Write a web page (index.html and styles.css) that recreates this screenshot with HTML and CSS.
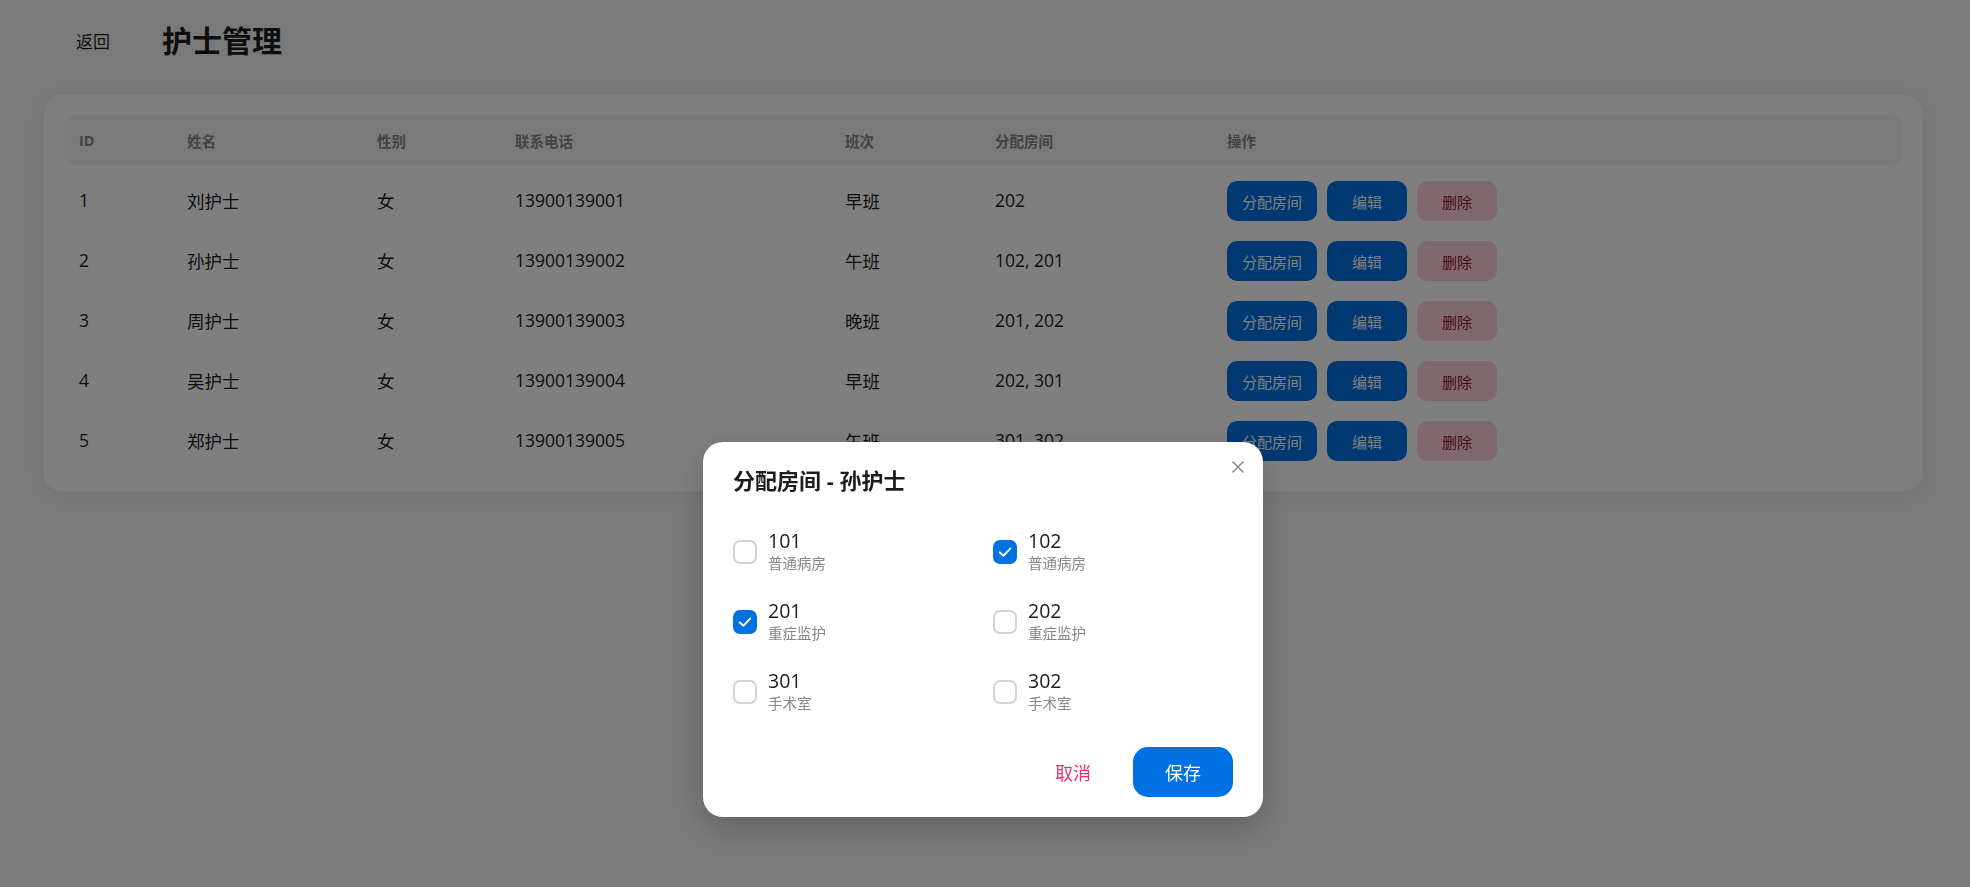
FILE: index.html
```html
<!DOCTYPE html>
<html lang="zh-CN">
<head>
<meta charset="utf-8">
<title>护士管理</title>
<link rel="stylesheet" href="styles.css">
</head>
<body>
<div class="page">
  <header class="topbar">
    <a class="back">返回</a>
    <h1 class="title">护士管理</h1>
  </header>

  <section class="card">
    <div class="table">
      <div class="thead trow">
        <div class="cell">ID</div>
        <div class="cell">姓名</div>
        <div class="cell">性别</div>
        <div class="cell">联系电话</div>
        <div class="cell">班次</div>
        <div class="cell">分配房间</div>
        <div class="cell">操作</div>
      </div>
      <div class="tbody">
        <div class="trow">
          <div class="cell">1</div><div class="cell">刘护士</div><div class="cell">女</div><div class="cell">13900139001</div><div class="cell">早班</div><div class="cell">202</div>
          <div class="cell actions"><button class="btn btn-primary">分配房间</button><button class="btn btn-primary">编辑</button><button class="btn btn-danger">删除</button></div>
        </div>
        <div class="trow">
          <div class="cell">2</div><div class="cell">孙护士</div><div class="cell">女</div><div class="cell">13900139002</div><div class="cell">午班</div><div class="cell">102, 201</div>
          <div class="cell actions"><button class="btn btn-primary">分配房间</button><button class="btn btn-primary">编辑</button><button class="btn btn-danger">删除</button></div>
        </div>
        <div class="trow">
          <div class="cell">3</div><div class="cell">周护士</div><div class="cell">女</div><div class="cell">13900139003</div><div class="cell">晚班</div><div class="cell">201, 202</div>
          <div class="cell actions"><button class="btn btn-primary">分配房间</button><button class="btn btn-primary">编辑</button><button class="btn btn-danger">删除</button></div>
        </div>
        <div class="trow">
          <div class="cell">4</div><div class="cell">吴护士</div><div class="cell">女</div><div class="cell">13900139004</div><div class="cell">早班</div><div class="cell">202, 301</div>
          <div class="cell actions"><button class="btn btn-primary">分配房间</button><button class="btn btn-primary">编辑</button><button class="btn btn-danger">删除</button></div>
        </div>
        <div class="trow">
          <div class="cell">5</div><div class="cell">郑护士</div><div class="cell">女</div><div class="cell">13900139005</div><div class="cell">午班</div><div class="cell">301, 302</div>
          <div class="cell actions"><button class="btn btn-primary">分配房间</button><button class="btn btn-primary">编辑</button><button class="btn btn-danger">删除</button></div>
        </div>
      </div>
    </div>
  </section>
</div>

<div class="overlay">
  <div class="modal">
    <button class="close" aria-label="关闭">
      <svg width="12" height="12" viewBox="0 0 12 12"><path d="M1 1 L11 11 M11 1 L1 11" stroke="#86868b" stroke-width="1.5" stroke-linecap="round" fill="none"/></svg>
    </button>
    <h2 class="modal-title">分配房间 - 孙护士</h2>
    <div class="rooms">
      <label class="room">
        <span class="check"></span>
        <span class="room-text"><span class="room-no">101</span><span class="room-type">普通病房</span></span>
      </label>
      <label class="room">
        <span class="check checked"><svg width="24" height="24" viewBox="0 0 24 24"><path d="M6.8 12.4 L10.4 15.8 L17.2 8.6" stroke="#fff" stroke-width="2" stroke-linecap="round" stroke-linejoin="round" fill="none"/></svg></span>
        <span class="room-text"><span class="room-no">102</span><span class="room-type">普通病房</span></span>
      </label>
      <label class="room">
        <span class="check checked"><svg width="24" height="24" viewBox="0 0 24 24"><path d="M6.8 12.4 L10.4 15.8 L17.2 8.6" stroke="#fff" stroke-width="2" stroke-linecap="round" stroke-linejoin="round" fill="none"/></svg></span>
        <span class="room-text"><span class="room-no">201</span><span class="room-type">重症监护</span></span>
      </label>
      <label class="room">
        <span class="check"></span>
        <span class="room-text"><span class="room-no">202</span><span class="room-type">重症监护</span></span>
      </label>
      <label class="room">
        <span class="check"></span>
        <span class="room-text"><span class="room-no">301</span><span class="room-type">手术室</span></span>
      </label>
      <label class="room">
        <span class="check"></span>
        <span class="room-text"><span class="room-no">302</span><span class="room-type">手术室</span></span>
      </label>
    </div>
    <div class="modal-footer">
      <button class="mbtn mbtn-cancel">取消</button>
      <button class="mbtn mbtn-save">保存</button>
    </div>
  </div>
</div>
</body>
</html>
```

FILE: styles.css
```css
* { box-sizing: border-box; }

html, body {
  margin: 0;
  padding: 0;
}

body {
  background: #f5f5f7;
  font-family: "Open Sans", "Noto Sans CJK SC", sans-serif;
  color: #1d1d1f;
  width: 1970px;
  height: 887px;
  overflow: hidden;
}

.page {
  padding: 20px 47px 0 43px;
}

.topbar {
  display: flex;
  align-items: center;
  gap: 52px;
  height: 42px;
  padding-left: 33px;
  margin-bottom: 32px;
}

.back {
  font-size: 17px;
  color: #1d1d1f;
  cursor: pointer;
  line-height: 1;
}

.title {
  margin: 0;
  font-size: 30px;
  font-weight: 700;
  line-height: 42px;
  color: #1d1d1f;
}

.card {
  background: #ffffff;
  border-radius: 20px;
  padding: 20px 20px 20px;
  box-shadow: 0 4px 24px rgba(0, 0, 0, 0.06);
  border: 1px solid rgba(0, 0, 0, 0.03);
}

.trow {
  display: grid;
  grid-template-columns: 108px 190px 138px 330px 150px 232px 1fr;
  align-items: center;
}

.thead {
  height: 50px;
  background: #f5f5f7;
  border-radius: 10px;
  margin-bottom: 6px;
}

.thead .cell {
  font-size: 14.5px;
  font-weight: 700;
  color: #86868b;
}

.cell {
  padding: 0 15px;
}

.tbody .trow {
  height: 60px;
  font-size: 17.5px;
  color: #1d1d1f;
}

.tbody .cell {
  padding-bottom: 2px;
}

.tbody .actions {
  padding-bottom: 0;
}

.actions {
  display: flex;
  gap: 10px;
}

.btn {
  height: 40px;
  min-width: 80px;
  padding: 0 15px;
  border: none;
  border-radius: 10px;
  font-family: inherit;
  font-size: 15px;
  cursor: pointer;
}

.btn-primary {
  background: #0071e3;
  color: #ffffff;
}

.btn-danger {
  background: #ffd3dd;
  color: #94143c;
}

.overlay {
  position: fixed;
  inset: 0;
  background: rgba(0, 0, 0, 0.5);
  display: flex;
  justify-content: center;
  align-items: flex-start;
  padding-top: 442px;
  padding-right: 4px;
}

.modal {
  position: relative;
  width: 560px;
  background: #ffffff;
  border-radius: 20px;
  padding: 20px 30px 20px;
  box-shadow: 0 10px 30px rgba(0, 0, 0, 0.2);
}

.close {
  position: absolute;
  top: 13px;
  right: 13px;
  width: 24px;
  height: 24px;
  border: none;
  background: transparent;
  padding: 0;
  display: flex;
  align-items: center;
  justify-content: center;
  cursor: pointer;
}

.modal-title {
  margin: 0;
  font-size: 22px;
  font-weight: 700;
  line-height: 36px;
  color: #1d1d1f;
}

.rooms {
  margin-top: 31px;
  display: grid;
  grid-template-columns: 240px 240px;
  column-gap: 20px;
  row-gap: 24px;
}

.room {
  display: flex;
  align-items: center;
  gap: 11px;
  height: 46px;
  cursor: pointer;
}

.check {
  width: 24px;
  height: 24px;
  border-radius: 7px;
  border: 2px solid #d2d2d7;
  flex-shrink: 0;
  display: flex;
  align-items: center;
  justify-content: center;
}

.check.checked {
  background: #0071e3;
  border-color: #0071e3;
}

.check svg {
  flex-shrink: 0;
}

.room-text {
  display: flex;
  flex-direction: column;
  margin-top: -2px;
}

.room-no {
  font-size: 19.5px;
  line-height: 26px;
  color: #1d1d1f;
}

.room-type {
  font-size: 14.5px;
  line-height: 20px;
  color: #86868b;
}

.modal-footer {
  margin-top: 32px;
  display: flex;
  justify-content: flex-end;
  gap: 10px;
}

.mbtn {
  width: 100px;
  height: 50px;
  border: none;
  border-radius: 15px;
  font-family: inherit;
  font-size: 18px;
  cursor: pointer;
}

.mbtn-cancel {
  background: transparent;
  color: #f0306c;
}

.mbtn-save {
  background: #0071e3;
  color: #ffffff;
}
```
